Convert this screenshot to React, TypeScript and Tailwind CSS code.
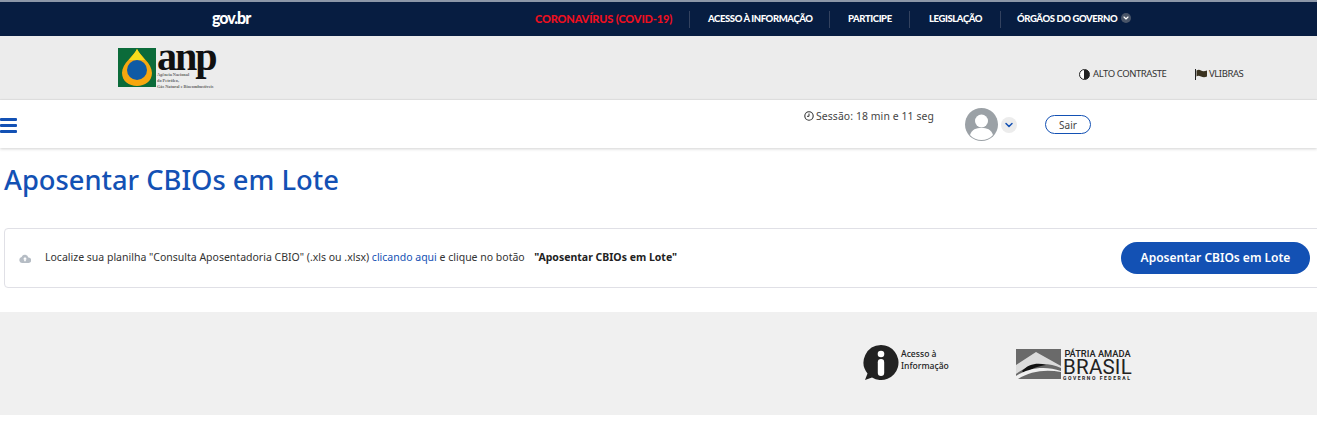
import { ChevronDown } from "lucide-react";

const sans = "font-['Noto_Sans','Open_Sans',sans-serif]";

function Divider() {
  return <span className="w-px h-[17px] bg-[#33425f] shrink-0" />;
}

function TopLink({ children, className }: { children: React.ReactNode; className: string }) {
  return <span className={`text-[9.500px] font-black text-white tracking-[-0.4px] whitespace-nowrap pt-[1px] ${className}`}>{children}</span>;
}

export default function App() {
  return (
    <div className={`${sans} w-[1317px] h-[424px] overflow-hidden bg-white text-[#333]`}>
      {/* Gov bar */}
      <div className="h-[36px] bg-[#071d41] border-t-2 border-[#8c97a8] flex items-center font-['Lato',sans-serif]">
        <span className="ml-[212px] w-[323px] text-[16px] font-black text-white tracking-[-1px] leading-none -mt-[3px]">gov.br</span>
        <span className="text-[11px] font-black text-[#ee0f1e] tracking-[-0.15px] whitespace-nowrap w-[154px]">CORONAVÍRUS (COVID-19)</span>
        <Divider />
        <TopLink className="ml-[18px] w-[121px]">ACESSO À INFORMAÇÃO</TopLink>
        <Divider />
        <TopLink className="ml-[18px] w-[61px]">PARTICIPE</TopLink>
        <Divider />
        <TopLink className="ml-[19px] w-[71px]">LEGISLAÇÃO</TopLink>
        <Divider />
        <TopLink className="ml-[16px] w-[104px]">ÓRGÃOS DO GOVERNO</TopLink>
        <span className="flex items-center justify-center size-[10px] rounded-full bg-[#4a5568] -mt-[3px]">
          <ChevronDown size={8} strokeWidth={3.5} className="text-white" />
        </span>
      </div>

      {/* Logo strip */}
      <div className="h-[64px] bg-[#ececec] border-b border-[#e4e4e4] flex items-start">
        <div className="ml-[118px] mt-[12px] flex">
          <svg width="38" height="39" viewBox="0 0 38 39" className="shrink-0">
            <rect width="38" height="39" fill="#0b6b3a" />
            <path d="M19 1 C22 8 34 15 34 25 C34 33 27 38 19 38 C11 38 4 33 4 25 C4 15 16 8 19 1Z" fill="#f7a70f" />
            <path d="M19 1 C21 5 24 8 27 12 L11 12 C14 8 17 5 19 1Z" fill="#f7dc1c" />
            <circle cx="19" cy="22" r="10" fill="#0f5aa5" />
          </svg>
          <div className="ml-[1px] w-[62px]">
            <div className="font-['Liberation_Serif',serif] text-[39px] leading-[24px] font-bold text-[#111] tracking-[-2px] h-[24px] -mt-[3px] scale-x-[1.03] origin-left">anp</div>
            <div className="font-['Liberation_Serif',serif] text-[4.300px] leading-[6px] font-bold text-[#666] mt-[3px] whitespace-nowrap">
              <div>Agência Nacional</div>
              <div>do Petróleo,</div>
              <div>Gás Natural e Biocombustíveis</div>
            </div>
          </div>
        </div>
        <div className="ml-[860px] mt-[31px] flex items-center text-[9.500px] text-[#333] whitespace-nowrap tracking-[-0.42px]">
          <span className="size-[11px] rounded-full border-[1.5px] border-[#222] bg-[linear-gradient(90deg,#fff_50%,#222_50%)] mr-[3px] shrink-0" />
          <span className="w-[87px]">ALTO CONTRASTE</span>
          <svg width="12" height="11" viewBox="0 0 12 11" className="ml-[15px] shrink-0">
            <path d="M0.5 0v11" stroke="#222" strokeWidth="1" />
            <path d="M1.5 1.5 Q4 0 6 1.5 T12 1.5V7.5 Q9 9 6 7.5 T1.5 7.5Z" fill="#3b3320" />
          </svg>
          <span className="ml-[2px]">VLIBRAS</span>
        </div>
      </div>

      {/* Session bar */}
      <div className="h-[48px] bg-white shadow-[0_1px_3px_rgba(0,0,0,0.18)] flex items-start relative">
        <div className="mt-[18px] w-[17px] flex flex-col gap-[3px]">
          <span className="h-[3px] bg-[#1351b4] rounded-[1px]" />
          <span className="h-[3px] bg-[#1351b4] rounded-[1px]" />
          <span className="h-[3px] bg-[#1351b4] rounded-[1px]" />
        </div>
        <div className="ml-[787px] mt-[8px] flex items-center text-[10.400px] leading-[16px] text-[#444] whitespace-nowrap tracking-[0.1px]">
          <svg width="10" height="10" viewBox="0 0 10 10" className="mr-[2px] shrink-0">
            <circle cx="5" cy="5" r="4.2" fill="none" stroke="#333" strokeWidth="1.1" />
            <path d="M5 2.5V5.3H3" fill="none" stroke="#333" strokeWidth="1" />
          </svg>
          <span className="w-[149px]">Sessão: 18 min e 11 seg</span>
        </div>
        <div className="mt-[8px] flex items-center">
          <svg width="33" height="33" viewBox="0 0 33 33" className="shrink-0">
            <circle cx="16.5" cy="16.5" r="16.5" fill="#9ba1a6" />
            <circle cx="16.5" cy="13" r="6.5" fill="#fff" />
            <path d="M5 27 C7 21 11 20 16.5 20 C22 20 26 21 28 27 C25 30.500 21 32 16.500 32 C12 32 8 30.500 5 27Z" fill="#fff" />
          </svg>
          <span className="ml-[3px] size-[16px] rounded-full bg-[#ececec] flex items-center justify-center">
            <ChevronDown size={12} strokeWidth={3} className="text-[#1351b4]" />
          </span>
        </div>
        <button className="ml-[28px] mt-[15px] w-[46px] h-[19px] rounded-full border border-[#1351b4] text-[10px] leading-[18px] text-[#444]">Sair</button>
      </div>

      {/* Page title */}
      <h1 className="ml-[4px] mt-[11px] text-[27.300px] leading-[42px] font-medium text-[#1351b4]">Aposentar CBIOs em Lote</h1>

      {/* Upload card */}
      <div className="ml-[4px] mt-[27px] w-[1330px] h-[60px] border border-[#e0e0e6] rounded-[4px] flex items-center bg-white">
        <svg width="12" height="9" viewBox="0 0 12 9" className="ml-[14px] shrink-0">
          <path d="M3 9 A3 3 0 0 1 2.6 3.100 A3.500 3.500 0 0 1 9.300 3.400 A2.800 2.800 0 0 1 9.500 9Z" fill="#b5bcc4" />
          <path d="M6 3 L8 5.300H6.800V7.300H5.200V5.300H4Z" fill="#fff" />
        </svg>
        <p className="ml-[14px] text-[10.500px] text-[#333] whitespace-pre w-[1076px]">
          Localize sua planilha "Consulta Aposentadoria CBIO" (.xls ou .xlsx) <span className="text-[#1351b4]">clicando aqui</span> e clique no botão  <b className="font-bold text-[#222] ml-[4px]">"Aposentar CBIOs em Lote"</b>
        </p>
        <button className="shrink-0 w-[189px] h-[32px] rounded-full bg-[#1351b4] text-white text-[12px] font-semibold">Aposentar CBIOs em Lote</button>
      </div>

      {/* Footer */}
      <div className="mt-[24px] h-[103px] bg-[#f0f0f0] flex items-start">
        <div className="ml-[863px] mt-[33px] flex items-start">
          <svg width="36" height="36" viewBox="0 0 36 36" className="shrink-0">
            <path d="M18 0 A17.500 17.500 0 1 1 9 32.500 L2 35 L4.500 28.500 A17.500 17.500 0 0 1 18 0Z" fill="#222" />
            <circle cx="18" cy="9" r="3.300" fill="#fff" />
            <rect x="14.800" y="14" width="6.400" height="17" rx="3.200" fill="#fff" />
          </svg>
          <div className="ml-[2px] mt-[3px] w-[49px] text-[8.600px] leading-[12px] font-medium text-[#222] whitespace-nowrap">
            <div>Acesso à</div>
            <div>Informação</div>
          </div>
        </div>
        <div className="ml-[66px] mt-[37px] flex items-start">
          <svg width="45" height="30" viewBox="0 0 45 30" className="shrink-0">
            <rect width="45" height="30" fill="#6a6a6a" />
            <path d="M0 16 L20 3 L45 17 V19 C30 12 14 14 0 25Z" fill="#dcdcdc" />
            <path d="M6 22 C12 15 22 13 30 16 C22 17 14 20 9 25Z" fill="#111" />
            <path d="M0 27 C14 18 30 17 45 22 V23 C30 20 14 22 2 30 H0Z" fill="#f0f0f0" />
          </svg>
          <div className="ml-[2px] w-[69px] font-['Roboto',sans-serif] text-[#222] whitespace-nowrap -mt-[1px]">
            <div className="text-[9.300px] leading-[11px] font-medium text-center">PÁTRIA AMADA</div>
            <div className="text-[20.500px] leading-[16px] tracking-[0.2px] text-center">BRASIL</div>
            <div className="text-[5px] leading-[6px] font-bold tracking-[1.550px] whitespace-nowrap">GOVERNO FEDERAL</div>
          </div>
        </div>
      </div>
    </div>
  );
}
